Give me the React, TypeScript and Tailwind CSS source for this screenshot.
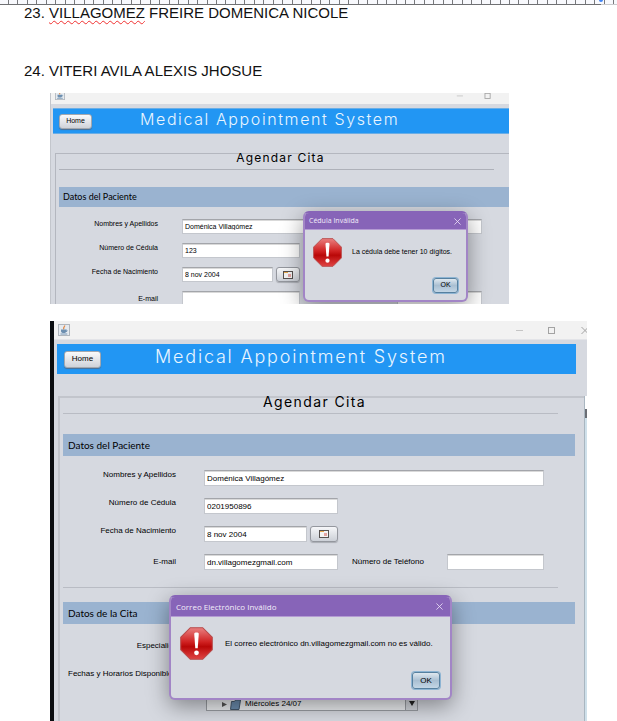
import type { ReactNode } from "react";

const sans = "font-['Liberation_Sans',Arial,sans-serif]";
const section = "font-['Lato','Open_Sans',sans-serif] font-normal";
const ui = "font-['Open_Sans','Noto_Sans',sans-serif] font-normal";
const wide = "font-['Inter',sans-serif] tracking-widest";

const inputBase =
  "min-w-0 border border-[#c4c7cd] border-t-[#a3a5aa] bg-white pl-[2px] text-black shadow-[inset_0_1px_0_#d9d9d9] outline-none";
const smallInput = `${inputBase} h-[15px] text-[7px]`;
const largeInput = `${inputBase} h-4 text-[8px]`;

function Ruler() {
  return (
    <div className="relative h-[5px] bg-[#f8f9fd]">
      <div className="flex h-1 justify-between pr-[3px] pl-2">
        {Array.from({ length: 65 }, (_, i) => (
          <span key={i} className="w-px bg-[#77787c]" />
        ))}
      </div>
      <div className="flex h-px">
        <span className="flex-1 bg-[#6f7073]" />
        <span className="w-4 bg-[#c9cacd]" />
      </div>
      <span className="absolute top-0 right-[14px] h-[2px] w-1 rounded-b-full bg-[#4285f4]" />
    </div>
  );
}

function JavaIcon({ className }: { className: string }) {
  return (
    <svg viewBox="0 0 12 12" className={className} aria-hidden="true">
      <rect x="0.5" y="0.5" width="11" height="11" fill="#e6ebf0" stroke="#b0b6bd" />
      <path d="M6.500 1.500c1 1.200-2 1.800-.6 3.800" fill="none" stroke="#e08a4a" strokeWidth="1.3" />
      <path d="M3 5.600h5.400v1.600c0 1.200-1 1.800-2.700 1.800s-2.700-.6-2.700-1.800z" fill="#6d8fb0" />
      <path d="M8.200 6.100c1.500 0 1.200 1.600-.2 1.600M2.500 10h6.800" fill="none" stroke="#6d8fb0" strokeWidth="0.9" />
    </svg>
  );
}

function StopIcon({ className, id }: { className: string; id: string }) {
  return (
    <svg viewBox="0 0 32 32" className={`shrink-0 ${className}`} role="img" aria-label="Error">
      <defs>
        <linearGradient id={id} x1="0" y1="0" x2="0" y2="1">
          <stop offset="0" stopColor="#e98080" />
          <stop offset="0.45" stopColor="#d02222" />
          <stop offset="0.6" stopColor="#b90808" />
          <stop offset="1" stopColor="#e04545" />
        </linearGradient>
      </defs>
      <path d="M10 .7h12L31.300 10v12L22 31.300H10L.7 22V10z" fill={`url(#${id})`} stroke="#b84a4a" />
      <path d="M13.800 6.500c0-1.500 4.400-1.500 4.400 0L17.200 20.500h-2.400z" fill="#fff" />
      <circle cx="16" cy="25" r="2.300" fill="#fff" />
    </svg>
  );
}

function CalendarButton({ className }: { className: string }) {
  return (
    <button
      type="button"
      aria-label="Elegir fecha"
      className={`flex items-center justify-center rounded-[3px] border border-[#94979e] bg-linear-to-b from-[#f6f7f9] to-[#ccd0d7] shadow-[0_1px_1px_#a9acb3] ${className}`}
    >
      <svg viewBox="0 0 10 8" className="h-2 w-[10px]" aria-hidden="true">
        <rect x="0.5" y="0.5" width="9" height="7" fill="#f3f3f3" stroke="#55504e" />
        <path d="M1 1.500h4" stroke="#e8a94e" />
        <rect x="5" y="3" width="3" height="3" fill="#e3a3a0" />
      </svg>
    </button>
  );
}

function HomeButton({ className }: { className: string }) {
  return (
    <button
      type="button"
      className={`rounded-[3px] border border-[#a5a8ae] bg-linear-to-b from-[#fafafb] to-[#cfd2d9] text-black shadow-[0_1px_1px_#4d6f94] ${className}`}
    >
      Home
    </button>
  );
}

type DialogProps = {
  id: string;
  title: string;
  className: string;
  titleClass: string;
  children: ReactNode;
};

function Dialog({ id, title, className, titleClass, children }: DialogProps) {
  return (
    <div
      role="dialog"
      aria-labelledby={id}
      className={`absolute flex flex-col overflow-hidden rounded-md border-2 border-[#a285c6] border-t-[#8764b8] bg-[#d6d9e0] shadow-[0_6px_22px_rgba(0,0,0,0.4)] ${className}`}
    >
      <div className={`${ui} flex items-center justify-between border-b border-[#b49bd3] bg-[#8764b8] text-[#f3edf9] ${titleClass}`}>
        <h3 id={id} className="font-normal">{title}</h3>
        <button type="button" aria-label="Cerrar">
          <svg viewBox="0 0 8 8" className="h-[7px] w-[7px]" aria-hidden="true">
            <path d="M.5.5l7 7M7.500.5l-7 7" stroke="#eee6f7" strokeWidth="0.9" />
          </svg>
        </button>
      </div>
      {children}
    </div>
  );
}

function OkButton({ className }: { className: string }) {
  return (
    <button
      type="button"
      className={`rounded-[3px] border border-[#56809f] bg-linear-to-b from-[#dfe8ef] via-[#a9bfd2] to-[#c3d6e5] text-black shadow-[0_0_0_1px_#8db4d3] ${className}`}
    >
      OK
    </button>
  );
}

function WindowControls({ className, close }: { className: string; close?: boolean }) {
  return (
    <svg viewBox="0 0 74 8" className={className} fill="none" stroke="#a3a3a3" aria-hidden="true">
      <path d="M1 4.500h7" stroke="#c5c5c5" />
      <rect x="33.500" y="1.500" width="6" height="6" />
      {close && <path d="M66.500 1l7 7M73.500 1l-7 7" />}
    </svg>
  );
}

function CedulaWindow() {
  const label = "w-[99px] shrink-0 text-right leading-[10px]";
  return (
    <section className={`${sans} relative mr-[108px] ml-[50px] h-[211px] overflow-hidden border-l border-[#c3c6cc] bg-[#d6d9e0] text-[7px] text-black`}>
      <div className="flex h-[11px] items-start justify-between overflow-hidden bg-[#f2f2f2] pl-1">
        <JavaIcon className="-mt-[3px] h-[10px] w-[10px]" />
        <WindowControls className="-mt-px -mr-[11px] h-[7px] w-16" />
      </div>
      <header className="mt-1 ml-[2px] flex h-[26px] items-center border-y border-[#6aaee6] bg-[#2296f3] pl-[6px]">
        <HomeButton className="h-[15px] w-[33px]" />
        <h2 className={`${wide} ml-12 pb-1 text-[16px] leading-5 font-light whitespace-nowrap text-[#e9f5ff]`}>Medical Appointment System</h2>
      </header>
      <div className="mt-[19px] ml-1 border-t border-l border-[#b4b7bf] pl-[3px]">
        <div className="mr-[15px] h-4 border-b border-[#aeb1b9] pl-2">
          <h3 className={`${wide} text-center text-[12px] leading-2 font-normal`}>Agendar Cita</h3>
        </div>
        <h4 className={`${section} mt-[17px] flex h-5 items-center bg-[#9ab3d0] pl-1 text-[9px]`}>Datos del Paciente</h4>
        <div className="mt-3 mr-[27px] space-y-[9px]">
          <div className="flex items-start gap-6">
            <label htmlFor="a-nombre" className={label}>Nombres y Apellidos</label>
            <input id="a-nombre" defaultValue="Doménica Villagómez" className={`${smallInput} flex-1`} />
          </div>
          <div className="flex items-start gap-6">
            <label htmlFor="a-cedula" className={label}>Número de Cédula</label>
            <input id="a-cedula" defaultValue="123" className={`${smallInput} w-[118px]`} />
          </div>
          <div className="flex items-start gap-6">
            <label htmlFor="a-fecha" className={label}>Fecha de Nacimiento</label>
            <div className="flex gap-[3px]">
              <input id="a-fecha" defaultValue="8 nov 2004" className={`${smallInput} w-[91px]`} />
              <CalendarButton className="h-[15px] w-6" />
            </div>
          </div>
          <div className="flex items-center gap-6">
            <label htmlFor="a-email" className={label}>E-mail</label>
            <div className="flex flex-1 justify-between">
              <input id="a-email" className={`${smallInput} w-[118px]`} />
              <input aria-label="Número de Teléfono" className={`${smallInput} w-[85px]`} />
            </div>
          </div>
        </div>
      </div>
      <Dialog id="dlg-cedula" title="Cédula Inválida" className="top-[118px] left-[252px] h-[91px] w-[165px]" titleClass="h-[17px] pr-[5px] pl-1 text-[7px]">
        <div className="flex items-center gap-[10px] pt-2 pl-2">
          <StopIcon className="h-[29px] w-[29px]" id="stop-a" />
          <p className="whitespace-nowrap">La cédula debe tener 10 dígitos.</p>
        </div>
        <OkButton className="mt-[11px] mr-2 h-[15px] w-[25px] self-end" />
      </Dialog>
    </section>
  );
}

function CorreoWindow() {
  const label = "w-[113px] shrink-0 text-right leading-[10px]";
  return (
    <section className={`${sans} relative mt-[17px] mr-[30px] ml-[50px] overflow-hidden border-l-4 border-[#0b0d10] bg-[#d6d9e0] text-[8px] text-black`}>
      <div className="flex h-[19px] items-center justify-between border-b border-[#e3e4e8] bg-[#f2f2f2] pl-1">
        <JavaIcon className="h-3 w-3" />
        <WindowControls className="-mr-[2px] h-2 w-[74px]" close />
      </div>
      <header className="mt-1 mr-[11px] ml-[3px] flex h-[30px] items-center bg-[#2296f3] pl-[7px]">
        <HomeButton className="h-[17px] w-[37px]" />
        <h2 className={`${wide} ml-[54px] pb-1 text-[18px] leading-6 font-light whitespace-nowrap text-[#e9f5ff]`}>Medical Appointment System</h2>
      </header>
      <div className="mt-[22px] ml-1 flex">
        <div className="flex-1 border-t-2 border-l-2 border-[#c2c5cc] pb-[10px] pl-[3px]">
          <div className="mr-[26px] h-4 border-b border-[#b9bcc4] pl-2">
            <h3 className={`${wide} text-center text-[14px] leading-2 font-normal`}>Agendar Cita</h3>
          </div>
          <h4 className={`${section} mt-5 mr-[9px] flex h-[22px] items-center bg-[#9ab3d0] pl-[5px] text-[10px]`}>Datos del Paciente</h4>
          <div className="mt-[14px] mr-10 space-y-3">
            <div className="flex items-start gap-7">
              <label htmlFor="b-nombre" className={label}>Nombres y Apellidos</label>
              <input id="b-nombre" defaultValue="Doménica Villagómez" className={`${largeInput} flex-1`} />
            </div>
            <div className="flex items-start gap-7">
              <label htmlFor="b-cedula" className={label}>Número de Cédula</label>
              <input id="b-cedula" defaultValue="0201950896" className={`${largeInput} w-[134px]`} />
            </div>
            <div className="flex items-start gap-7">
              <label htmlFor="b-fecha" className={label}>Fecha de Nacimiento</label>
              <div className="flex gap-[3px]">
                <input id="b-fecha" defaultValue="8 nov 2004" className={`${largeInput} w-[103px]`} />
                <CalendarButton className="h-4 w-7" />
              </div>
            </div>
            <div className="flex items-center gap-7">
              <label htmlFor="b-email" className={label}>E-mail</label>
              <div className="flex flex-1 items-center">
                <input id="b-email" defaultValue="dn.villagomezgmail.com" className={`${largeInput} w-[134px]`} />
                <label htmlFor="b-telefono" className="mr-auto ml-[14px] leading-[10px] whitespace-nowrap">Número de Teléfono</label>
                <input id="b-telefono" className={`${largeInput} w-[97px]`} />
              </div>
            </div>
          </div>
          <hr className="mt-[17px] mr-[26px] border-[#b9bcc4]" />
          <h4 className={`${section} mt-[14px] mr-[9px] flex h-[22px] items-center bg-[#9ab3d0] pl-[5px] text-[10px]`}>Datos de la Cita</h4>
          <p className="mt-[17px] w-[119px] text-right leading-[10px]">Especialidad</p>
          <div className="mt-[18px] flex gap-6 pl-[5px]">
            <p className="w-[114px] leading-[10px] whitespace-nowrap">Fechas y Horarios Disponibles</p>
            <div className="flex h-[42px] w-[212px] items-end border border-[#9a9da3] bg-[#eceef1]">
              <div className="flex h-3 flex-1 items-center pl-[14px]">
                <svg viewBox="0 0 20 11" className="mr-1 h-[11px] w-5" aria-hidden="true">
                  <path d="M1 3l5 2.500L1 8z" fill="#555" />
                  <path d="M9.500 10.500l1-8h3l1-1.500h5l-1.500 9.500z" fill="#6b8cae" stroke="#44586d" />
                </svg>
                <span className="leading-[10px]">Miércoles 24/07</span>
              </div>
              <button type="button" aria-label="Bajar" className="flex h-full w-3 items-end justify-center border-l border-[#9a9da3] bg-[#d3d6dc] pb-1">
                <svg viewBox="0 0 6 5" className="h-[5px] w-[6px]" aria-hidden="true">
                  <path d="M0 0h6L3 5z" fill="#222" />
                </svg>
              </button>
            </div>
          </div>
        </div>
        <div className="flex w-[3px] flex-col border-l border-[#a9b6c0]">
          <span className="h-[13px] bg-white" />
          <span className="h-[9px] bg-[#6a6d74]" />
          <span className="flex-1 bg-[#cfe0ea]" />
        </div>
      </div>
      <Dialog id="dlg-correo" title="Correo Electrónico Inválido" className="top-[274px] left-[115px] h-[105px] w-[283px]" titleClass="h-5 pr-[7px] pl-[5px] text-[8px]">
        <div className="flex items-center gap-3 pt-[10px] pl-[9px]">
          <StopIcon className="h-[33px] w-[33px]" id="stop-b" />
          <p className="whitespace-nowrap">El correo electrónico dn.villagomezgmail.com no es válido.</p>
        </div>
        <OkButton className="mt-3 mr-[10px] h-[17px] w-7 self-end" />
      </Dialog>
    </section>
  );
}

export default function App() {
  return (
    <main className="bg-white">
      <Ruler />
      <ol className={`${sans} pl-6 text-[15px] leading-4 text-[#111]`}>
        <li className="h-[58px]">
          23. <span className="underline decoration-[#f03030] decoration-wavy decoration-1 underline-offset-2">VILLAGOMEZ</span> FREIRE DOMENICA NICOLE
        </li>
        <li className="h-[30px]">24. VITERI AVILA ALEXIS JHOSUE</li>
      </ol>
      <CedulaWindow />
      <CorreoWindow />
    </main>
  );
}
